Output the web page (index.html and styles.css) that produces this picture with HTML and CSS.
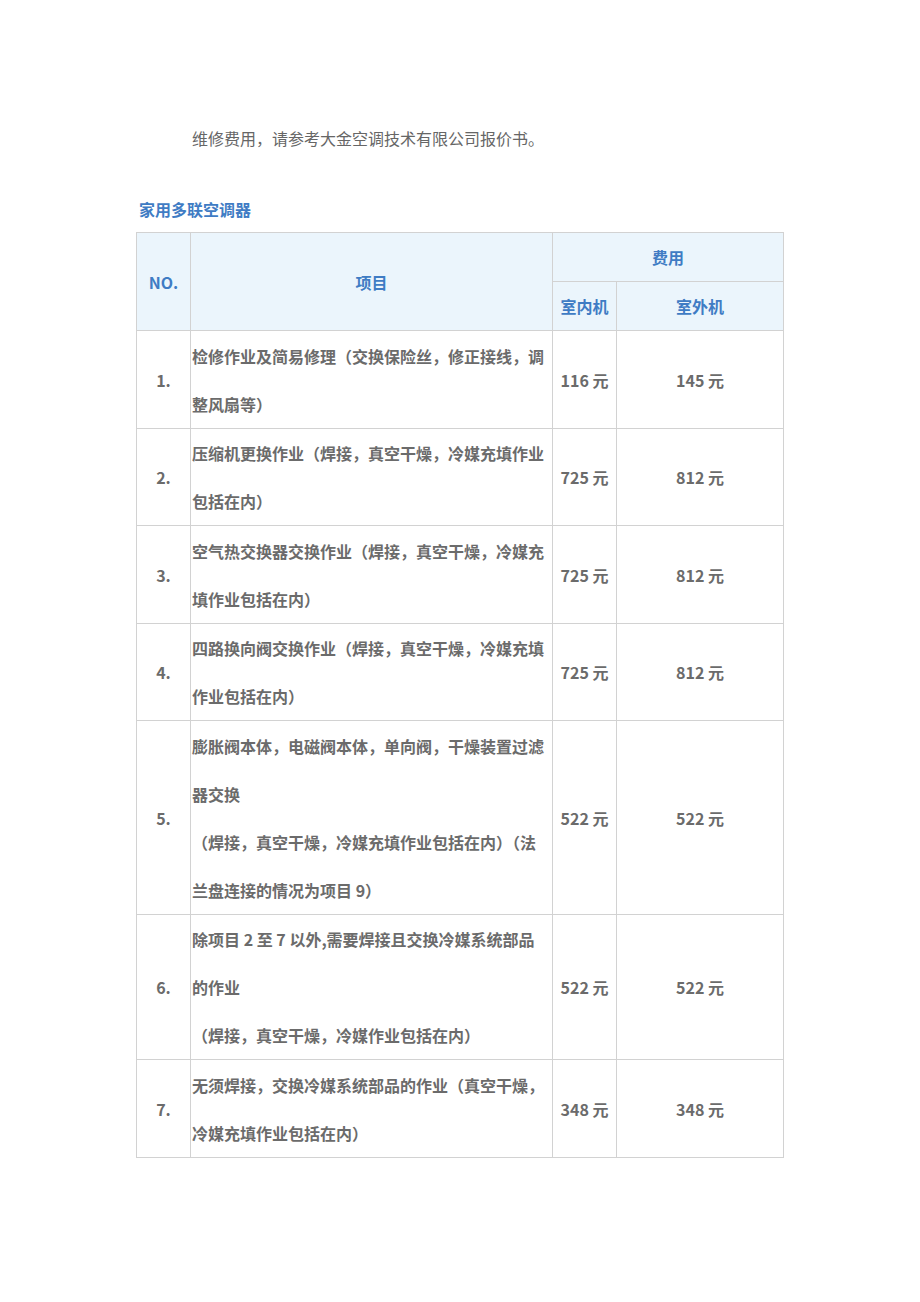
FILE: index.html
```html
<!DOCTYPE html>
<html lang="zh-CN">
<head>
<meta charset="utf-8">
<title>家用多联空调器</title>
<link rel="stylesheet" href="styles.css">
</head>
<body>
<div class="page">
  <p class="intro">维修费用，请参考大金空调技术有限公司报价书。</p>
  <h2 class="title">家用多联空调器</h2>
  <table class="fees">
    <colgroup>
      <col class="c-no">
      <col class="c-item">
      <col class="c-in">
      <col class="c-out">
    </colgroup>
    <thead>
      <tr class="h1">
        <th rowspan="2">NO.</th>
        <th rowspan="2">项目</th>
        <th colspan="2">费用</th>
      </tr>
      <tr class="h2">
        <th>室内机</th>
        <th>室外机</th>
      </tr>
    </thead>
    <tbody>
      <tr>
        <td class="no">1.</td>
        <td class="item">检修作业及简易修理（交换保险丝，修正接线，调整风扇等）</td>
        <td class="price">116 元</td>
        <td class="price">145 元</td>
      </tr>
      <tr>
        <td class="no">2.</td>
        <td class="item">压缩机更换作业（焊接，真空干燥，冷媒充填作业包括在内）</td>
        <td class="price">725 元</td>
        <td class="price">812 元</td>
      </tr>
      <tr>
        <td class="no">3.</td>
        <td class="item">空气热交换器交换作业（焊接，真空干燥，冷媒充填作业包括在内）</td>
        <td class="price">725 元</td>
        <td class="price">812 元</td>
      </tr>
      <tr>
        <td class="no">4.</td>
        <td class="item">四路换向阀交换作业（焊接，真空干燥，冷媒充填作业包括在内）</td>
        <td class="price">725 元</td>
        <td class="price">812 元</td>
      </tr>
      <tr>
        <td class="no">5.</td>
        <td class="item">膨胀阀本体，电磁阀本体，单向阀，干燥装置过滤器交换<br>（焊接，真空干燥，冷媒充填作业包括在内）（法兰盘连接的情况为项目 9）</td>
        <td class="price">522 元</td>
        <td class="price">522 元</td>
      </tr>
      <tr>
        <td class="no">6.</td>
        <td class="item">除项目 2 至 7 以外,需要焊接且交换冷媒系统部品<br>的作业<br>（焊接，真空干燥，冷媒作业包括在内）</td>
        <td class="price">522 元</td>
        <td class="price">522 元</td>
      </tr>
      <tr>
        <td class="no">7.</td>
        <td class="item">无须焊接，交换冷媒系统部品的作业（真空干燥，冷媒充填作业包括在内）</td>
        <td class="price">348 元</td>
        <td class="price">348 元</td>
      </tr>
    </tbody>
  </table>
</div>
</body>
</html>
```

FILE: styles.css
```css
html, body {
  margin: 0;
  padding: 0;
  background: #ffffff;
}

body {
  font-family: "Noto Sans CJK SC", "Noto Sans", sans-serif;
  color: #6b6b6b;
  font-size: 16px;
}

.page {
  padding: 126px 0 0 136px;
}

.intro {
  margin: 0;
  padding-left: 56px;
  line-height: 24px;
  font-weight: 400;
  color: #666666;
}

.title {
  margin: 47px 0 0;
  padding-left: 3px;
  font-size: 16px;
  line-height: 24px;
  font-weight: 700;
  color: #3f7cc4;
}

.fees {
  margin-top: 11px;
  border-collapse: collapse;
  table-layout: fixed;
  width: 647px;
}

.c-no { width: 54px; }
.c-item { width: 362px; }
.c-in { width: 64px; }
.c-out { width: 167px; }

.fees th,
.fees td {
  border: 1px solid #d2d2d2;
  padding: 0 1px;
  font-weight: 700;
  font-size: 16px;
  line-height: 48px;
}

.fees th {
  background: #ebf5fc;
  color: #3f7cc4;
  text-align: center;
  vertical-align: middle;
}

.fees .h1 th {
  height: 48px;
}

.fees .h2 th {
  height: 48px;
}

.fees td {
  color: #6b6b6b;
  vertical-align: middle;
  padding-top: 0.5px;
}

.fees td.no,
.fees td.price {
  text-align: center;
}

.fees td.item {
  text-align: left;
}
```
